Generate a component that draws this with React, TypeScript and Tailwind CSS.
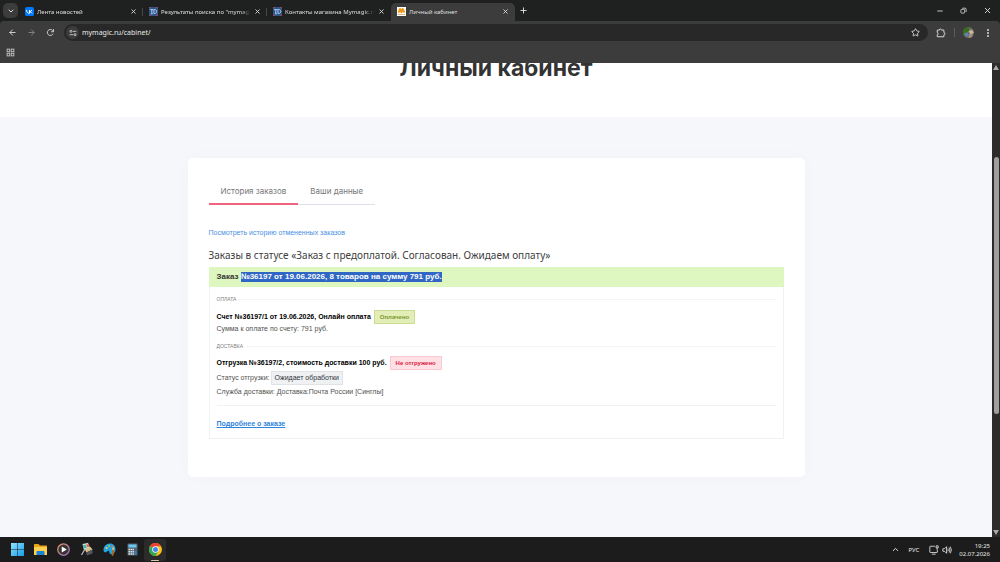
import type { ReactNode } from "react";
import {
  ArrowLeft,
  ArrowRight,
  ChevronDown,
  ChevronUp,
  Minus,
  Plus,
  Star,
  X,
} from "lucide-react";

type BrowserTab = {
  title: string;
  icon: ReactNode;
  active?: boolean;
};

/* ---------------- ICONS ---------------- */

function VkIcon() {
  return (
    <svg viewBox="0 0 24 24" className="size-[9px] shrink-0">
      <rect width="24" height="24" rx="5" fill="#0077ff" />
      <path
        d="M4 8c.3 5.500 3 9 8 9V8M12 12.500c3-.3 5-2 6.500-4.500M12 12.500c3 .3 5.500 2 7 4.500M9 9"
        fill="none"
        stroke="#fff"
        strokeWidth="2.600"
      />
    </svg>
  );
}

function ShopIcon() {
  return (
    <svg viewBox="0 0 24 24" className="size-[9px] shrink-0">
      <rect width="24" height="24" rx="2" fill="#28578f" />
      <path d="M0 2h5M19 2h5M0 22h5M19 22h5" stroke="#c04352" strokeWidth="3" />
      <path
        d="M3 7h9M7.500 7v11M13 7v10h3c6 0 6-10 0-10zM5 18h5"
        fill="none"
        stroke="#c3d3e8"
        strokeWidth="2.400"
      />
    </svg>
  );
}

function MagicIcon() {
  return (
    <svg viewBox="0 0 24 24" className="size-[9px] shrink-0">
      <rect width="24" height="24" fill="#fff" />
      <path
        d="M4 15 8 5l4 9 3-9 5 10"
        fill="none"
        stroke="#ee9613"
        strokeWidth="5"
        strokeLinejoin="round"
      />
      <path d="M2 20h20" stroke="#d9a35c" strokeWidth="2" />
    </svg>
  );
}

function ReloadIcon() {
  return (
    <svg viewBox="0 0 24 24" className="size-[9px]" fill="none" stroke="currentColor" strokeWidth="2.400">
      <path d="M19 15a8 8 0 1 1-1.500-8.500L20 9" />
      <path d="M20 3v7h-7" />
    </svg>
  );
}

function SiteInfoIcon() {
  return (
    <svg viewBox="0 0 24 24" className="size-2" fill="none" stroke="currentColor" strokeWidth="2.600">
      <path d="M12 7h10M2 17h10" />
      <circle cx="6" cy="7" r="3" />
      <circle cx="18" cy="17" r="3" />
    </svg>
  );
}

function ExtensionsIcon() {
  return (
    <svg viewBox="0 0 24 24" className="size-[10px]" fill="none" stroke="currentColor" strokeWidth="2.400" strokeLinejoin="round">
      <path d="M3 5h5a2.500 2.500 0 0 1 5 0h6v6a2.500 2.500 0 0 1 0 5v5H3v-5a2 2.500 0 0 0 0-5z" />
    </svg>
  );
}

function RestoreIcon() {
  return (
    <svg viewBox="0 0 24 24" className="size-[7px]" fill="none" stroke="currentColor" strokeWidth="2.800">
      <rect x="3" y="8" width="13" height="13" rx="3" />
      <path d="M8 4h9a4 4 0 0 1 4 4v9" />
    </svg>
  );
}

function AppsIcon() {
  return (
    <svg viewBox="0 0 24 24" className="size-[9px]" fill="none" stroke="currentColor" strokeWidth="2.400">
      <rect x="3" y="3" width="7" height="7" />
      <rect x="14" y="3" width="7" height="7" />
      <rect x="3" y="14" width="7" height="7" />
      <rect x="14" y="14" width="7" height="7" />
    </svg>
  );
}

function Avatar() {
  return (
    <svg viewBox="0 0 24 24" className="size-[11px]">
      <clipPath id="avatar">
        <circle cx="12" cy="12" r="12" />
      </clipPath>
      <g clipPath="url(#avatar)">
        <rect width="24" height="24" fill="#6f6a5c" />
        <path d="M0 0h14l-2 10-12 5z" fill="#35701f" />
        <path d="M12 9l7-3 5 6-7 5z" fill="#c9b6a2" />
        <path d="M3 15l6-3 3 5-4 5z" fill="#4d8cc4" />
        <path d="M13 16l8-1v9h-9z" fill="#a58a86" />
      </g>
    </svg>
  );
}

function StartIcon() {
  return (
    <svg viewBox="0 0 26 26" className="size-[13px]">
      <linearGradient id="start" x2="1" y2="1">
        <stop stopColor="#8fe4ff" />
        <stop offset="1" stopColor="#179be8" />
      </linearGradient>
      <path d="M0 0h12.500v12.500H0zM13.500 0H26v12.500H13.500zM0 13.500h12.500V26H0zM13.500 13.500H26V26H13.500z" fill="url(#start)" />
    </svg>
  );
}

function ExplorerIcon() {
  return (
    <svg viewBox="0 0 26 26" className="size-[13px]">
      <path d="M0 3a1 1 0 0 1 1-1h8l3 3h13a1 1 0 0 1 1 1v18H0z" fill="#e7a51c" />
      <path d="M0 8h26v15a1 1 0 0 1-1 1H1a1 1 0 0 1-1-1z" fill="#ffd04f" />
      <path d="M5 24v-6a2 2 0 0 1 2-2h12a2 2 0 0 1 2 2v6z" fill="#1683d4" />
    </svg>
  );
}

function PlayerIcon() {
  return (
    <svg viewBox="0 0 26 26" className="size-[13px]">
      <linearGradient id="player" x2="1" y2="1">
        <stop stopColor="#e79358" />
        <stop offset="1" stopColor="#a06bd0" />
      </linearGradient>
      <circle cx="13" cy="13" r="11.500" fill="#343434" stroke="url(#player)" strokeWidth="2.500" />
      <path d="M9.500 7v12l10-6z" fill="#fff" />
    </svg>
  );
}

function CardsIcon() {
  return (
    <svg viewBox="0 0 26 26" className="size-[13px]">
      <path d="M5 2l11-2 4 9-12 5z" fill="#d9eef2" />
      <path d="M6 4l5-1 3 6-6 2z" fill="#3ab5a0" />
      <path d="M12 3l5-1 2 5-4 2z" fill="#e65b4d" />
      <path d="M9 12l12-4 4 5-12 6z" fill="#d8c08a" />
      <path d="M12 19l13-6v8l-11 4z" fill="#55565c" />
      <path d="M10 12 3 24" stroke="#b4b9c2" strokeWidth="2.500" />
    </svg>
  );
}

function PaintIcon() {
  return (
    <svg viewBox="0 0 26 26" className="size-[13px]">
      <path d="M14 1C6 1 1 7 1 14c0 5 5 6 7 3s5-2 5 2c0 6 12 4 12-6 0-7-4-12-11-12z" fill="#23a4e0" />
      <circle cx="7" cy="10" r="2" fill="#ffcf47" />
      <circle cx="12" cy="6" r="2" fill="#7ed957" />
      <circle cx="18" cy="7" r="2" fill="#ed5a4b" />
      <path d="M19 13l4 1-2 11-3 1-1-4z" fill="#a76832" />
      <path d="M18 13l2-7 3 8z" fill="#f1c26b" />
    </svg>
  );
}

function CalculatorIcon() {
  return (
    <svg viewBox="0 0 26 26" className="size-[13px]">
      <rect x="3" y="1" width="20" height="24" rx="1" fill="#53606c" />
      <rect x="5" y="3" width="16" height="6" fill="#69c8f3" />
      <path d="M5 13h11M5 17.500h11M5 22h11" stroke="#dde2e6" strokeWidth="3" strokeDasharray="3 1" />
      <path d="M19 15.500v8" stroke="#2d7fc6" strokeWidth="4" />
    </svg>
  );
}

function ChromeIcon() {
  return (
    <svg viewBox="0 0 26 26" className="size-[13px]">
      <circle cx="13" cy="13" r="13" fill="#fbc116" />
      <path d="M13 13 1.700 6.500A13 13 0 0 1 24.300 6.500H13z" fill="#ea4335" />
      <path d="M1.700 6.500A13 13 0 0 0 13 26l5.600-9.700L13 13z" fill="#34a853" />
      <circle cx="13" cy="13" r="6.500" fill="#fff" />
      <circle cx="13" cy="13" r="5" fill="#4285f4" />
    </svg>
  );
}

function NetworkIcon() {
  return (
    <svg viewBox="0 0 24 24" className="size-[10px]" fill="none" stroke="currentColor" strokeWidth="2">
      <path d="M14 3H3a1 1 0 0 0-1 1v13a1 1 0 0 0 1 1h16a1 1 0 0 0 1-1v-6M7 22h9" />
      <path d="M17 2h5v5h-5zM19.500 7v4" />
    </svg>
  );
}

function VolumeIcon() {
  return (
    <svg viewBox="0 0 24 24" className="size-[10px]" fill="none" stroke="currentColor" strokeWidth="2">
      <path d="M2 9h4l5-5v16l-5-5H2z" />
      <path d="M14 9q2 3 0 6M17 6q4 6 0 12M20 4q5 8 0 16" />
    </svg>
  );
}

/* ---------------- DATA ---------------- */

const browserTabs: BrowserTab[] = [
  { title: "Лента новостей", icon: <VkIcon /> },
  { title: 'Результаты поиска по "mymagic"', icon: <ShopIcon /> },
  { title: "Контакты магазина Mymagic.ru", icon: <ShopIcon /> },
  { title: "Личный кабинет", icon: <MagicIcon />, active: true },
];

const taskbarApps = [
  { name: "Пуск", icon: <StartIcon /> },
  { name: "Проводник", icon: <ExplorerIcon /> },
  { name: "Медиаплеер", icon: <PlayerIcon /> },
  { name: "Карты", icon: <CardsIcon /> },
  { name: "Paint", icon: <PaintIcon /> },
  { name: "Калькулятор", icon: <CalculatorIcon /> },
  { name: "Chrome", icon: <ChromeIcon />, active: true },
];

/* ---------------- BROWSER ---------------- */

function TabStrip() {
  return (
    <div className="flex h-[21px] shrink-0 bg-[#1f2120] text-[#dedede]">
      <button
        aria-label="Поиск вкладок"
        className="mt-[3px] ml-[3px] flex size-[15px] shrink-0 items-center justify-center rounded-[5px] bg-[#3c3c3c]"
      >
        <ChevronDown size={8} strokeWidth={3} />
      </button>
      <div className="ml-px flex min-w-0">
        {browserTabs.map((tab, i) => (
          <div
            key={i}
            className={`relative mt-[3px] flex w-[124px] items-center pr-[6px] pl-[6px] pb-px ${
              tab.active ? "rounded-t-[5px] bg-[#3c3c3c]" : ""
            }`}
          >
            {tab.icon}
            <span
              className={`ml-[3px] flex-1 overflow-hidden text-[6px] leading-[10px] whitespace-nowrap ${
                tab.active ? "" : "mask-r-from-90%"
              }`}
            >
              {tab.title}
            </span>
            <button aria-label="Закрыть вкладку" className="ml-1">
              <X size={7} strokeWidth={3} />
            </button>
            {i < 2 && <span className="absolute right-0 h-2 w-px bg-[#464847]" />}
          </div>
        ))}
      </div>
      <button aria-label="Новая вкладка" className="ml-1 self-center">
        <Plus size={9} strokeWidth={2.5} />
      </button>
      <div className="ml-auto flex items-center gap-4 pr-2">
        <button aria-label="Свернуть">
          <Minus size={8} strokeWidth={2.5} />
        </button>
        <button aria-label="Восстановить">
          <RestoreIcon />
        </button>
        <button aria-label="Закрыть">
          <X size={9} strokeWidth={2.5} />
        </button>
      </div>
    </div>
  );
}

function Toolbar() {
  return (
    <div className="flex h-[23px] shrink-0 items-center rounded-t-[4px] bg-[#3c3c3c] px-2 text-[#d5d5d5]">
      <div className="flex items-center gap-[10px]">
        <button aria-label="Назад">
          <ArrowLeft size={9} strokeWidth={2.5} />
        </button>
        <button aria-label="Вперёд" className="text-[#858585]">
          <ArrowRight size={9} strokeWidth={2.5} />
        </button>
        <button aria-label="Обновить">
          <ReloadIcon />
        </button>
      </div>
      <div className="ml-[9px] flex h-[17px] min-w-0 flex-1 items-center rounded-full bg-[#282828] pr-2 pl-[2px]">
        <button
          aria-label="Сведения о сайте"
          className="flex size-[13px] shrink-0 items-center justify-center rounded-full bg-[#3c3c3c]"
        >
          <SiteInfoIcon />
        </button>
        <input
          aria-label="Адрес"
          defaultValue="mymagic.ru/cabinet/"
          className="ml-[3px] min-w-0 flex-1 bg-transparent text-[7px] leading-[13px] text-[#e8e8e8] outline-none"
        />
        <button aria-label="В закладки">
          <Star size={9} strokeWidth={2.5} />
        </button>
      </div>
      <button aria-label="Расширения" className="ml-2">
        <ExtensionsIcon />
      </button>
      <span className="ml-2 h-[9px] w-px bg-[#5c5c5c]" />
      <button aria-label="Профиль" className="ml-2">
        <Avatar />
      </button>
      <button aria-label="Меню" className="ml-[9px] flex h-2 w-[9px] flex-col items-center justify-between">
        <span className="size-[2px] bg-[#b0b0b0]" />
        <span className="size-[2px] bg-[#b0b0b0]" />
        <span className="size-[2px] bg-[#b0b0b0]" />
      </button>
    </div>
  );
}

function Scrollbar() {
  return (
    <div className="flex w-2 shrink-0 flex-col items-center bg-[#2c2c2c] py-[2px]">
      <svg viewBox="0 0 6 5" className="h-[5px] w-[6px]">
        <path d="M3 0l3 5H0z" fill="#a8a8a8" />
      </svg>
      <div className="flex min-h-0 w-full flex-1 flex-col items-center">
        <div className="grow-[87]" />
        <div className="w-[5px] grow-[257] rounded-full bg-[#9f9f9f]" />
        <div className="grow-[116]" />
      </div>
      <svg viewBox="0 0 6 5" className="h-[5px] w-[6px]">
        <path d="M3 5L0 0h6z" fill="#a8a8a8" />
      </svg>
    </div>
  );
}

/* ---------------- ORDERS ---------------- */

function SectionLabel({ children }: { children: ReactNode }) {
  return (
    <h3 className="flex h-2 items-center gap-[3px] text-[5px] text-[#808080] uppercase">
      {children}
      <span className="h-px flex-1 bg-[#f4f4f4]" />
    </h3>
  );
}

function Badge({ className, children }: { className: string; children: ReactNode }) {
  return (
    <span className={`flex h-[14px] items-center border ${className}`}>
      {children}
    </span>
  );
}

function OrderCard() {
  return (
    <article className="mt-1 border border-[#f0f1f2] text-[7px] leading-[10px] text-[#505050]">
      <h3 className="-mx-px -mt-px flex h-5 items-center bg-[#def7c1] px-2 text-[8px] font-bold text-[#333]">
        <span className="whitespace-pre">Заказ </span>
        <span className="bg-[#3067c5] text-white">
          №36197 от 19.06.2026, 8 товаров на сумму 791 руб.
        </span>
      </h3>
      <div className="px-[7px] pt-2 pb-[9px]">
        <SectionLabel>Оплата</SectionLabel>
        <div className="mt-[7px] flex items-center gap-[3px]">
          <b className="text-black">Счет №36197/1 от 19.06.2026, Онлайн оплата</b>
          <Badge className="border-[#cbdc93] bg-[#e2edb8] px-[5px] text-[6px] font-bold text-[#7b9a2f]">
            Оплачено
          </Badge>
        </div>
        <p>Сумма к оплате по счету: 791 руб.</p>

        <div className="mt-2">
          <SectionLabel>Доставка</SectionLabel>
        </div>
        <div className="mt-[6px] flex items-center gap-[3px]">
          <b className="text-black">Отгрузка №36197/2, стоимость доставки 100 руб.</b>
          <Badge className="border-[#fbc9d1] bg-[#ffe0e4] px-[5px] text-[6px] font-bold text-[#d8213f]">
            Не отгружено
          </Badge>
        </div>
        <div className="mt-px flex items-center gap-px">
          <span>Статус отгрузки:</span>
          <Badge className="border-[#e0e3e6] bg-[#eff1f3] px-[3px] text-[7px] text-[#2f353b]">
            Ожидает обработки
          </Badge>
        </div>
        <p className="mt-[2px]">Служба доставки: Доставка:Почта России [Синглы]</p>
        <hr className="mt-2 border-[#f2f2f2]" />
        <a href="#order" className="mt-[13px] block w-fit font-bold text-[#2f83dd] underline">
          Подробнее о заказе
        </a>
      </div>
    </article>
  );
}

function CabinetPage() {
  return (
    <main className="min-w-0 flex-1 overflow-hidden bg-[#f5f7fa] font-['Liberation_Sans',Arial,sans-serif]">
      <div className="flex h-[54px] items-start justify-center bg-white">
        <h1 className="-mt-2 font-['Inter',sans-serif] text-[23px] leading-[26px] font-bold text-[#333]">
          Личный кабинет
        </h1>
      </div>
      <section className="mx-auto mt-[41px] max-w-[617px] rounded-[5px] bg-white px-[21px] pt-[22px] pb-[38px] shadow-[0_0_20px_rgba(0,0,0,0.02)]">
        <nav className="flex w-fit font-['Inter',sans-serif] text-[8px] leading-[22px] text-[#777]">
          <button className="border-b-2 border-[#f0647f] px-3 pb-px">История заказов</button>
          <button className="border-b border-[#dfe1e8] px-3 pb-[2px]">Ваши данные</button>
        </nav>
        <a href="#cancelled" className="mt-[23px] block w-fit text-[7px] leading-[10px] text-[#4a8fe2]">
          Посмотреть историю отмененных заказов
        </a>
        <h2 className="mt-[9px] font-['Noto_Sans',sans-serif] text-[10px] leading-4 text-[#404040]">
          Заказы в статусе «Заказ с предоплатой. Согласован. Ожидаем оплату»
        </h2>
        <OrderCard />
      </section>
    </main>
  );
}

function Taskbar() {
  return (
    <footer className="flex h-[25px] shrink-0 items-center bg-[#1c1c1c] pr-[10px] pl-[6px] text-[#e6e6e6]">
      <div className="flex gap-px">
        {taskbarApps.map((app) => (
          <button
            key={app.name}
            aria-label={app.name}
            className={`relative flex size-[22px] items-center justify-center rounded-[3px] ${
              app.active ? "bg-[#2b2b2b]" : ""
            }`}
          >
            {app.icon}
            {app.active && (
              <span className="absolute bottom-0 h-px w-2 rounded-full bg-[#d8c9a4]" />
            )}
          </button>
        ))}
      </div>
      <div className="ml-auto flex items-center text-[6px] leading-[8px]">
        <ChevronUp size={9} strokeWidth={2.5} />
        <span className="ml-[9px]">РУС</span>
        <span className="ml-[10px] flex gap-[3px]">
          <NetworkIcon />
          <VolumeIcon />
        </span>
        <div className="ml-[7px] text-right">
          <div>19:25</div>
          <div>02.07.2026</div>
        </div>
      </div>
    </footer>
  );
}

export default function App() {
  return (
    <div className="flex h-screen flex-col overflow-hidden bg-[#3c3c3c] font-['Noto_Sans',sans-serif]">
      <div className="shrink-0 bg-[#1f2120]">
        <TabStrip />
        <Toolbar />
      </div>
      <div className="flex h-[19px] shrink-0 items-center pb-[2px] pl-[6px] text-[#c4c4c4]">
        <button aria-label="Группы вкладок">
          <AppsIcon />
        </button>
      </div>
      <div className="flex min-h-0 flex-1">
        <CabinetPage />
        <Scrollbar />
      </div>
      <Taskbar />
    </div>
  );
}
